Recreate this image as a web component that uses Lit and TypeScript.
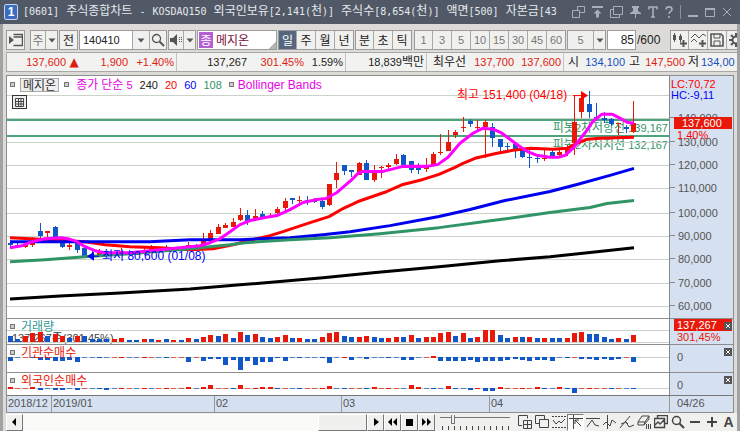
import { LitElement, html, svg, css, nothing, TemplateResult } from "lit";
import { customElement, property } from "lit/decorators.js";
import { classMap } from "lit/directives/class-map.js";

const RED = "#e8190a";
const BLUE = "#1257c8";

// Hangul runs are set at their own size beside the smaller Latin digits.
const t = (text: string) =>
  text
    .split(/([가-힣]+)/)
    .filter((p) => p)
    .map((p) => (/[가-힣]/.test(p) ? html`<span class="ko">${p}</span>` : p));

const textStyles = css`
  * { box-sizing: border-box; }
  button, input, select {
    font: inherit; color: inherit; margin: 0; padding: 0; border: 0;
    background: none; border-radius: 0; appearance: none; outline: none;
  }
  .ko { font-family: "Noto Sans CJK KR", sans-serif; font-size: 12px; line-height: 1; }
`;

/* ---------- price data: up?, high, low, body top, body bottom (chart units) ---------- */
type Candle = [number, number, number, number, number];
const candles: Candle[] = [
  [0, 240, 247, 242, 244], [0, 242, 246, 244, 246], [1, 242, 247, 243, 246], [1, 236, 246, 239, 244],
  [0, 222, 239, 230, 235], [1, 230, 238, 230, 232], [0, 225, 236, 226, 236], [0, 235, 247, 236, 246],
  [1, 242, 249, 244, 246], [0, 239, 252, 241, 249], [0, 246, 257, 247, 255], [0, 250, 258, 254, 255],
  [1, 248, 256, 252, 255], [1, 250, 254, 251, 253], [0, 251, 255, 252, 254], [1, 247, 254, 250, 253],
  [0, 249, 254, 251, 253], [0, 251, 254, 252, 254], [1, 247, 254, 249, 253], [1, 244, 250, 246, 249],
  [1, 246, 250, 247, 249], [0, 244, 250, 246, 249], [1, 246, 249, 247, 248], [1, 245, 249, 246, 248],
  [1, 241, 248, 244, 247], [1, 243, 248, 244, 246], [1, 232, 245, 239, 245], [1, 229, 239, 232, 239],
  [1, 223, 233, 226, 233], [1, 222, 227, 224, 227], [1, 217, 226, 221, 226], [1, 207, 220, 214, 219],
  [0, 209, 224, 214, 221], [1, 208, 220, 215, 219], [0, 210, 217, 213, 216], [1, 212, 216, 215, 216],
  [1, 206, 213, 208, 212], [1, 197, 212, 200, 207], [0, 197, 203, 197, 199], [1, 196, 204, 199, 200],
  [0, 196, 204, 199, 200], [0, 197, 202, 198, 201], [0, 198, 208, 200, 206], [1, 184, 205, 184, 204],
  [1, 162, 188, 173, 180], [0, 165, 175, 165, 171], [0, 170, 177, 170, 172], [1, 162, 175, 163, 175],
  [0, 160, 180, 163, 180], [1, 165, 182, 171, 180], [1, 166, 178, 167, 168], [1, 163, 170, 165, 167],
  [1, 154, 165, 159, 164], [0, 154, 165, 155, 165], [0, 161, 173, 161, 170], [0, 163, 174, 165, 170],
  [1, 158, 172, 167, 169], [1, 152, 167, 154, 165], [1, 134, 155, 152, 153], [1, 130, 151, 142, 151],
  [1, 130, 138, 132, 135], [1, 117, 132, 127, 128], [0, 119, 127, 121, 124], [1, 120, 130, 127, 128],
  [1, 120, 158, 122, 127], [0, 123, 147, 127, 138], [0, 139, 153, 139, 147], [0, 143, 151, 146, 147],
  [0, 142, 158, 144, 149], [0, 148, 158, 148, 157], [0, 150, 168, 157, 158], [0, 155, 163, 158, 159],
  [1, 150, 161, 158, 159], [0, 150, 156, 152, 156], [1, 148, 157, 152, 155], [1, 145, 156, 147, 153],
  [1, 95, 155, 122, 143], [1, 98, 118, 98, 112], [0, 91, 118, 104, 112], [0, 103, 121, 117, 119],
  [0, 112, 123, 118, 120], [0, 118, 126, 119, 124], [1, 123, 135, 123, 124], [0, 125, 133, 127, 129],
  [1, 101, 133, 123, 132],
];

// Positive: buying day (red), negative: selling day (blue).
const volume = [
  -6, -3, 6, 9, 10, -6, 8, 6, -4, 6, -6, -3, -3, -3, 3, 4, -2, -2, 3, -3, 2, -3, 2, -2, 4, -3, 5, 7, -6, 8, -4, 10,
  -7, 8, -5, -4, 5, 7, -4, 4, -3, -3, 5, 9, 10, -6, -5, 5, 6, -5, -4, 4, 5, -5, 7, -4, 5, 5, 9, 10, -6, 9, -4, 5, 12,
  12, -7, -4, 5, -5, 5, -4, 4, -4, -4, 4, 9, 10, -8, -8, -5, -3, 4, -3, 7,
];
const institution = [
  -4, -1, 1, -1, -3, -3, -4, -4, -3, -5, -1, -1, -1, -1, 1, 1, -1, -1, 1, 1, -1, -1, 1, 1, -5, 1, -4, -2, -2, -8, -3,
  -13, -4, -8, -5, -5, -1, -4, -1, -1, -1, -1, -1, -6, -1, 1, -3, -1, -2, -1, -1, -1, -1, -3, -3, -1, 1, 2, -4, -4,
  -4, -4, -3, -5, -4, -4, -4, -3, -2, -3, -4, -3, -3, -4, -1, -1, 1, -2, -2, -3, -2, -3, -2, 1, -5,
];
const foreign = [
  2, 1, 1, 2, -2, -1, -2, -2, -1, -2, 1, -1, -1, -2, -1, 1, 1, -1, 1, -1, 1, 1, 1, 1, 2, -1, 2, 4, 1, 1, -1, 4, 1, 1,
  2, 2, -1, 1, -1, -1, 1, 1, 1, 3, -1, -1, 1, 1, -1, 2, 1, 1, 1, -1, 4, 2, -1, -1, -1, 3, -1, -1, -2, 1, -3, -3, 2,
  1, 1, 1, 1, 2, -1, -1, 2, -1, -5, 1, 1, 1, 1, -1, 1, -1, -1,
];

const averages: { color: string; points: string }[] = [
  { color: "#000", points: "10,298 60,295 120,292 190,288 240,284 323,277 373,272 439,266 500,260 550,256 597,251 634,247" },
  { color: "#ff0000", points: "10,237 50,239 85,241 105,244 130,246 160,247 190,249 213,248 233,244 257,238 270,235 283,231 307,223 329,216 343,208 358,201 387,191 403,184 423,179 439,174 455,167 463,163 475,158 497,153 513,150 530,148 553,149 567,148 577,143 587,139 600,138 634,137" },
  { color: "#0000f0", points: "10,241 150,241 190,239 240,239 290,237 323,234 350,231 390,225 423,219 439,216 470,209 505,200 550,191 577,184 610,175 634,168" },
  { color: "#2f9566", points: "10,261 45,259 85,256 130,253 190,248 230,244 245,242 290,239 330,237 380,233 439,227 500,219 550,212 590,207 607,203 634,200" },
  { color: "#f0f", points: "10,247 22,245 32,241 45,238 60,237 68,238 77,241 85,246 95,250 105,252 130,252 160,249 190,246 200,245 210,242 220,238 230,231 240,224 250,220 265,217 277,215 290,209 303,202 317,199 326,198 337,192 351,180 358,173 363,171 383,171 403,166 427,166 438,164 448,157 460,143 473,133 483,128 493,129 502,133 510,139 518,145 527,151 537,155 550,157 558,157 565,155 573,148 580,139 587,130 593,121 602,114 612,114 620,118 627,122 634,123" },
];

const FIRST_X = 10;
const STEP = 7.42;
const barX = (i: number) => Math.round(FIRST_X + i * STEP);

const levels = [140, 130, 120, 110, 100, 90, 80, 70, 60].map((k) => ({
  label: `${k},000`,
  y: Math.round(305 - (k - 60) * 2.333),
}));
const TOP = 76;
const MAIN_H = 241;
const pct = (v: number, total: number) => `${((v / total) * 100).toFixed(2)}%`;

/* ---------- icons ---------- */
const icon = (w: number, h: number, body: TemplateResult) =>
  html`<svg class="icon" width=${w} height=${h} viewBox="0 0 ${w} ${h}" fill="none" stroke="currentColor" aria-hidden="true">${body}</svg>`;
const arrowDown = icon(8, 5, svg`<path d="M0.5 0.5H7.5L4 4.5Z" fill="currentColor" stroke="none"/>`);
const glass = (s: string) =>
  icon(14, 14, svg`<circle cx="5.5" cy="5.5" r="4" stroke-width=${s}/><path d="M8.5 8.5L13 13" stroke-width="2"/>`);

const titleIcons: [string, TemplateResult][] = [
  ["겹치기", icon(13, 12, svg`<path d="M5.5 4.5V.5H12.5V6.5H7.5M.5 4.5H7.5V11.5H.5Z"/>`)],
  ["맨 위로", icon(11, 12, svg`<path d="M0 1H11" stroke-width="2"/><path d="M5.5 3.5L9.5 7.5H7V11.5H4V7.5H1.5Z" fill="currentColor" stroke="none"/>`)],
  ["복제", icon(13, 12, svg`<path d="M3.5 .5H12.5V8.5H3.5ZM3.5 3.5H.5V11.5H9.5V8.5"/>`)],
  ["고정", icon(11, 12, svg`<path d="M2 0H9V2H8V5L11 7V8H6V12H5V8H0V7L3 5V2H2Z" fill="currentColor" stroke="none"/>`)],
  ["글꼴", icon(10, 12, svg`<path d="M1 3.5V1H9V3.5M5 1V11M3 11H7" stroke-width="1.6"/>`)],
  ["도움말", icon(8, 12, svg`<path d="M1 3.5C1 0 7 0 7 3.5C7 5.5 4 5.5 4 8M4 10V12" stroke-width="1.6"/>`)],
];
const windowIcons: [string, TemplateResult][] = [
  ["최소화", icon(10, 12, svg`<path d="M0 10H10" stroke-width="2"/>`)],
  ["최대화", icon(10, 12, svg`<path d="M.5 2.5H9.5V10.5H.5Z"/><path d="M0 3H10" stroke-width="2"/>`)],
  ["닫기", icon(10, 12, svg`<path d="M1 2L9 10M9 2L1 10"/>`)],
];

const chartTools: [string, TemplateResult][] = [
  ["봉 추가", icon(15, 14, svg`<path d="M2.5 0V9M8.5 1V9" /><path d="M1 2H4V7H1ZM7 3H10V7H7Z" fill="currentColor" stroke="none"/><path d="M11.5 7V14M8 10.5H15" stroke-width="2"/>`)],
  ["지표 추가", icon(15, 14, svg`<path d="M0 5L4 1L8 5L12 1L15 3M0 9L3 6L6 9"/><path d="M11.5 7V14M8 10.5H15" stroke-width="2"/>`)],
  ["저장", icon(14, 14, svg`<path d="M1 1H11L13 3V13H1Z" stroke-width="1.6"/><path d="M4 1V5H10V1M4 13V8H10V13"/>`)],
  ["설정", icon(14, 14, svg`<circle cx="7" cy="7" r="3.5" stroke-width="2"/><path d="M7 0V3M7 11V14M0 7H3M11 7H14M2 2L4 4M10 10L12 12M12 2L10 4M4 10L2 12" stroke-width="2"/>`)],
];

const drawTools: [string, TemplateResult][] = [
  ["차트 나누기", icon(14, 14, svg`<path d="M9.5 3.5V.5H.5V10.5H4M5.5 5.5H13.5V13.5H5.5ZM9.5 5.5V13.5M5.5 9.5H13.5"/>`)],
  ["차트 겹치기", icon(14, 14, svg`<path d="M.5 .5H9.5V4M.5 .5V8.5H4M4.5 4.5H13.5V12.5H4.5Z"/>`)],
  ["구간 설정", icon(14, 14, svg`<path d="M0 1.5H14M0 12.5H14" stroke-dasharray="2 1"/><path d="M1 5L4 9L7 6L9 8L13 4"/>`)],
  ["십자선", icon(14, 14, svg`<path d="M0 3.5H14M4.5 0V14"/><path d="M6 5L12 11M6 9V5H10"/>`)],
  ["추세선", icon(14, 14, svg`<path d="M0 3.5H14M1 12L6 5L9 10L13 11"/>`)],
  ["수직선", icon(14, 14, svg`<path d="M4.5 0V14M0 10L3 7L7 11L9 5L13 8"/>`)],
  ["각도선", icon(14, 14, svg`<path d="M0 13L10 1M1 9L6 7L9 12L14 10M5 6L8 9"/>`)],
  ["지우개", icon(14, 14, svg`<path d="M1 7L5 1H12L8 7ZM1 7V10H7L8 7M7 10L12 4V1"/><path d="M9.5 9V14M11.5 9V14M13.5 9V14"/>`)],
  ["그림 저장", icon(14, 14, svg`<path d="M3.5 3V.5H13.5V8.5H11M.5 3.5H10.5V12.5H.5ZM1 10L4 7L6 9L10 5" stroke-width="1.4"/>`)],
  ["돋보기", glass("1.5")],
  ["축소", icon(14, 14, svg`<path d="M2 7H12" stroke-width="2"/>`)],
  ["확대", icon(14, 14, svg`<path d="M2 7H12M7 2V12" stroke-width="2"/>`)],
];

/* ---------- window title ---------- */
@customElement("title-bar")
export class TitleBar extends LitElement {
  static styles = [
    textStyles,
    css`
      :host { display: flex; align-items: center; height: 24px; padding: 0 8px 0 4px; background: #515966; color: #e6e9ee; }
      .badge { width: 14px; height: 16px; border: 1px solid #c9d6f2; border-radius: 2px; background: #3c6cc0; color: #fff; font: bold 12px/14px "Liberation Sans", sans-serif; text-align: center; }
      .name { display: flex; gap: 7px; flex: 1; min-width: 0; margin: 0 0 0 5px; overflow: hidden; white-space: nowrap; font: 400 10px/20px "DejaVu Sans Mono", monospace; }
      .tools { display: flex; gap: 7px; align-items: center; color: #a9afb8; }
      button { display: flex; }
      .rule { width: 1px; height: 14px; background: #8b929d; }
    `,
  ];
  render() {
    const words = ["[0601]", "주식종합차트", "-", "KOSDAQ150", "외국인보유[2,141(천)]", "주식수[8,654(천)]", "액면[500]", "자본금[43"];
    const button = ([label, art]: [string, TemplateResult]) => html`<button aria-label=${label}>${art}</button>`;
    return html`<span class="badge">1</span>
      <h1 class="name">${words.map((w) => html`<span>${t(w)}</span>`)}</h1>
      <div class="tools">${titleIcons.map(button)}<span class="rule"></span>${windowIcons.map(button)}</div>`;
  }
}

/* ---------- symbol and period controls ---------- */
@customElement("chart-toolbar")
export class ChartToolbar extends LitElement {
  static styles = [
    textStyles,
    css`
      :host { display: flex; gap: 1px; height: 20px; overflow: hidden; color: #222; line-height: 18px; }
      .group { display: flex; flex: none; border: 1px solid #9c9c9c; background: #f0f0ee; }
      .group > * { display: flex; flex: none; align-items: center; justify-content: center; width: 19px; border-left: 1px solid #a8a8a8; }
      .group > :first-child { border-left: 0; width: 17px; }
      .group > .slim { width: 12px; }
      .group > .mid { width: 17px; }
      .group > button.sound { width: 14px; }
      .on { background: #56677d; color: #fff; }
      .icon { flex: none; color: #555; }
      .screen { margin-right: 4px; }
      .minutes { margin-left: 1px; color: #777; }
      .group > select.market { width: 14px; color: #777; text-align: center; }
      .group > input.code { width: 52px; padding-left: 3px; background: #fff; }
      .stock { display: flex; flex: none; align-items: center; width: 80px; gap: 3px; padding: 0 1px; border: 1px solid #9c9c9c; background: linear-gradient(135deg, transparent 50%, #b4b4b4 50%) right bottom / 7px 7px no-repeat #fff; color: #7a1040; white-space: nowrap; }
      .kind { display: flex; align-items: center; justify-content: center; width: 14px; height: 16px; background: #b45fd2; color: #fff; }
      .group > select.unit { width: 25px; color: #777; text-align: center; }
      .count { display: flex; flex: none; align-items: center; gap: 1px; font-size: 12px; }
      .count input { width: 29px; height: 20px; border: 1px solid #9c9c9c; background: #fff; text-align: right; padding-right: 1px; }
      .tools { margin-left: 9px; }
    `,
  ];
  render() {
    const button = (label: string) =>
      html`<button class=${classMap({ on: label === "일" })}>${t(label)}</button>`;
    return html`
      <div class="group screen"><button aria-label="화면">${icon(14, 14, svg`<path d="M4.5 1.5H13.5V12.5H4.5M4.5 4H13.5" stroke-width="1.5"/><path d="M0 3L5 7L0 11Z" fill="currentColor" stroke="none"/>`)}</button></div>
      <div class="group"><select class="market ko" aria-label="시장"><option>주</option></select><button class="slim" aria-label="시장 선택">${arrowDown}</button></div>
      <div class="group"><button>${t("전")}</button></div>
      <div class="group">
        <input class="code" aria-label="종목코드" value="140410" /><button class="mid" aria-label="최근 종목">${arrowDown}</button><button class="mid" aria-label="종목 찾기">${glass("1.3")}</button>
      </div>
      <div class="group"><button class="sound" aria-label="소리">${icon(12, 12, svg`<path d="M0 4H3L7 0V12L3 8H0Z" fill="currentColor" stroke="none"/><path d="M9.5 3V9M11.5 3V9" stroke-dasharray="1 1"/>`)}</button><button class="slim" aria-label="소리 설정">${arrowDown}</button></div>
      <div class="stock"><span class="kind">${t("종")}</span>${t("메지온")}</div>
      <div class="group">${["일", "주", "월", "년"].map(button)}</div>
      <div class="group">${["분", "초", "틱"].map(button)}</div>
      <div class="group minutes">${["1", "3", "5", "10", "15", "30", "45", "60"].map(button)}</div>
      <div class="group"><select class="unit" aria-label="간격"><option>5</option></select><button class="slim" aria-label="간격 선택">${arrowDown}</button></div>
      <label class="count"><input aria-label="표시 개수" value="85" />/600</label>
      <div class="group tools">${chartTools.map(([label, art]) => html`<button aria-label=${label}>${art}</button>`)}</div>`;
  }
}

/* ---------- quote line ---------- */
@customElement("quote-line")
export class QuoteLine extends LitElement {
  static styles = [
    textStyles,
    css`
      :host {
        display: grid; height: 20px; overflow: hidden; border: 1px solid #a8a8a8; border-right: 0; background: #f2f2f0; line-height: 19px; white-space: nowrap; text-align: right; color: #222;
        grid-template-columns: 59px 16px 46px 49px 70px 57px 42px 81px 39px 48px 50px 15px 46px 15px 45px 14px minmax(0, 1fr);
      }
      .up { color: #e01b10; }
      .down { color: #1450c0; }
      .tri { text-align: center; font-family: "DejaVu Sans", sans-serif; font-size: 12px; }
      .end { border-right: 1px solid #c4c4c4; padding-right: 2px; }
      .last { padding-left: 2px; text-align: left; }
    `,
  ];
  render() {
    const cells: [string, string][] = [
      ["137,600", "up"], ["▲", "up tri"], ["1,900", "up"], ["+1.40%", "up end"],
      ["137,267", ""], ["301.45%", "up"], ["1.59%", "end"], ["18,839백만", "end"],
      ["최우선", ""], ["137,700", "up"], ["137,600", "up end"],
      ["시", ""], ["134,100", "down"], ["고", ""], ["147,500", "up"], ["저", ""], ["134,00", "down last"],
    ];
    return cells.map(([text, cls]) => html`<span class=${cls}>${t(text)}</span>`);
  }
}

/* ---------- one sub-chart with bars around a base line ---------- */
@customElement("bar-pane")
export class BarPane extends LitElement {
  @property() name = "";
  @property() note = "";
  @property() tone = "red";
  @property() tag = "";
  @property() value = "";
  @property({ type: Number }) h = 26;
  @property({ type: Number }) base = 13;
  @property({ type: Boolean }) stacked = false;
  @property({ attribute: false }) data: number[] = [];
  static styles = [
    textStyles,
    css`
      :host { display: grid; grid-template-columns: minmax(0, 1fr) 64px; border-top: 1px solid #8e8e8e; }
      .plot { position: relative; background: #fff; }
      .shape { position: absolute; inset: 0; width: 100%; height: 100%; }
      .head { position: relative; display: flex; align-items: center; gap: 6px; padding-left: 3px; height: 15px; }
      .dot { width: 5px; height: 5px; border: 1px solid #777; background: #ccc; }
      .teal { color: #2f9a92; }
      .red { color: #e8190a; }
      .note { position: absolute; left: 5px; bottom: -1px; line-height: 14px; color: #444; }
      .axis { position: relative; border-left: 1px solid #888; background: #d5e0f0; color: #555; line-height: 12px; padding: 0 1px 0 4px; }
      .tag { display: block; padding-left: 3px; background: #e8190a; color: #fff; }
      .value { display: block; padding-left: 3px; }
      .zero { padding-top: 6px; }
      .close { position: absolute; right: 1px; top: 3px; width: 8px; height: 8px; display: flex; background: #555; color: #fff; }
    `,
  ];
  render() {
    return html`<div class="plot">
        ${this.note ? html`<span class="note">${t(this.note)}</span>` : nothing}
        <svg class="shape" viewBox="7 0 662 ${this.h}" preserveAspectRatio="none" shape-rendering="crispEdges">
          <rect x="7" y=${this.base} width="662" height="1" fill="#c9d3c9" />
          ${this.stacked ? svg`<rect x="7" y="11" width="662" height="1" fill="#c9d3c9"/>` : nothing}
          ${this.data.map((v, i) => {
            const size = Math.abs(v);
            const y = this.stacked ? this.base - size : v > 0 ? this.base + 1 - size : this.base;
            const faint = !this.stacked && size === 1 && i % 3 !== 0;
            return svg`<rect x=${barX(i) - 2} y=${y} width="5" height=${size} fill=${v > 0 ? RED : BLUE} fill-opacity=${faint ? 0.65 : 1}/>`;
          })}
        </svg>
        <div class="head"><i class="dot"></i><span class=${this.tone}>${t(this.name)}</span></div>
      </div>
      <div class="axis">
        ${this.tag ? html`<span class="tag">${this.tag}</span><span class="value red">${this.value}</span>` : html`<span class="value zero">${this.value}</span>`}
        <button class="close" aria-label="${this.name} 닫기">${icon(8, 8, svg`<path d="M2 2L6 6M6 2L2 6"/>`)}</button>
      </div>`;
  }
}

/* ---------- candles and moving averages ---------- */
@customElement("price-pane")
export class PricePane extends LitElement {
  static styles = [
    textStyles,
    css`
      :host { display: grid; grid-template-columns: minmax(0, 1fr) 64px; }
      .plot { position: relative; background: #fff; }
      .shape { position: absolute; inset: 0; width: 100%; height: 100%; }
      .legend { position: relative; display: flex; align-items: center; gap: 7px; padding-left: 3px; height: 17px; white-space: nowrap; }
      .dot { width: 5px; height: 5px; border: 1px solid #777; background: #ccc; }
      .stock { height: 14px; padding: 0 2px; border: 1px solid #aaa; background: #eee; color: #333; line-height: 11px; margin: 0 -2px; }
      .ma { color: #e800e8; }
      .wide { margin-left: -3px; font-size: 12px; }
      .g { color: #2f9566; }
      .b { color: #00f; }
      .r { color: #f00; }
      .grid { position: relative; display: flex; width: 15px; height: 14px; margin: 2px 0 0 5px; border: 1px solid #333; background: #eee; color: #444; align-items: center; justify-content: center; }
      .mark { position: absolute; transform: translateY(-50%); line-height: 14px; white-space: nowrap; }
      .peak { font-size: 12px; }
      .pivot { right: 1px; color: #2f9566; }
      .axis { position: relative; border-left: 1px solid #888; background: #d5e0f0; color: #555; overflow: hidden; }
      .level { left: 0; padding-left: 8px; }
      .level::before { content: ""; position: absolute; left: 0; top: 6px; width: 5px; height: 1px; background: #888; }
      .lc { line-height: 11px; padding: 3px 1px 0; }
      .now { left: 4px; right: 1px; padding-left: 8px; background: #e8190a; color: #fff; line-height: 12px; }
      .rate { left: 7px; }
    `,
  ];
  render() {
    const at = (y: number) => pct(y - TOP, MAIN_H);
    const left = (x: number) => pct(x - 7, 662);
    return html`<div class="plot">
        <span class="mark pivot" style="top:${at(128)}">${t("피봇2차저항선 139,167")}</span>
        <span class="mark pivot" style="top:${at(145)}">${t("피봇2차지지선 132,167")}</span>
        <svg class="shape" viewBox="7 ${TOP} 662 ${MAIN_H}" preserveAspectRatio="none">
          <g shape-rendering="crispEdges">
            <rect x="7" y="95" width="662" height="1" fill="#c9d3c9" />
            ${levels.map((l) => svg`<rect x="7" y=${l.y} width="662" height="1" fill="#c9d3c9"/>`)}
            <rect x="7" y="119" width="662" height="2" fill="#4da47c" />
            <rect x="7" y="135" width="662" height="2" fill="#4da47c" />
            ${candles.map(([up, hi, lo, top, bottom], i) => {
              const x = barX(i);
              const fill = up ? RED : BLUE;
              return svg`<rect x=${x} y=${hi} width="1" height=${lo - hi} fill=${fill}/><rect x=${x - 2} y=${top} width="5" height=${bottom - top} fill=${fill}/>`;
            })}
          </g>
          ${averages.map((a) => svg`<polyline points=${a.points} fill="none" stroke=${a.color} stroke-width="3" stroke-linejoin="round"/>`)}
          <path d="M573 95.5H582" stroke="#f00" />
          <path d="M581 91L588 95.5L581 100Z" fill="#f00" />
          <path d="M87 255.5L94 251V260Z" fill="#0000f0" />
          <path d="M94 255.5H99" stroke="#0000f0" />
        </svg>
        <div class="legend">
          <i class="dot"></i><span class="stock">${t("메지온")}</span><i class="dot"></i>
          <span class="ma">${t("종가 단순")} 5</span><span>240</span><span class="r">20</span><span class="b">60</span><span class="g">108</span>
          <i class="dot"></i><span class="ma wide">Bollinger Bands</span>
        </div>
        <button class="grid" aria-label="표 보기">${icon(9, 9, svg`<path d="M.5 .5H8.5V8.5H.5ZM3.5 .5V8.5M6 .5V8.5M.5 3.5H8.5M.5 6H8.5"/>`)}</button>
        <span class="mark peak r" style="left:${left(457)};top:${at(95)}">${t("최고 151,400 (04/18)")}</span>
        <span class="mark peak b" style="left:${left(102)};top:${at(255)}">${t("최저 80,600 (01/08)")}</span>
      </div>
      <div class="axis">
        <div class="lc"><div class="r">LC:70,72</div><div class="b">HC:-9,11</div></div>
        ${levels.map((l) => html`<span class="mark level" style="top:${at(l.y)}">${l.label}</span>`)}
        <span class="mark now" style="top:${at(123)}">137,600</span>
        <span class="mark rate r" style="top:${at(135)}">1,40%</span>
      </div>`;
  }
}

/* ---------- scroll bar and drawing tools ---------- */
@customElement("chart-footer")
export class ChartFooter extends LitElement {
  static styles = [
    textStyles,
    css`
      :host { display: flex; align-items: center; height: 18px; color: #444; background: #f0f0ee; }
      button { display: flex; align-items: center; justify-content: center; }
      .raised { flex: none; width: 17px; height: 17px; border: 1px solid #fff; border-right-color: #777; border-bottom-color: #777; background: #f0f0ee; color: #000; }
      .track { flex: 1; height: 17px; display: flex; justify-content: flex-end; background: #fafaf8; }
      .thumb { width: 49px; height: 17px; border: 1px solid #fff; border-right-color: #777; border-bottom-color: #777; background: #f0f0ee; }
      .zoom { flex: none; width: 70px; height: 16px; margin: 0 6px 0 5px; background: linear-gradient(#777, #777) 0 3px / 100% 1px no-repeat, repeating-linear-gradient(90deg, #444 0 1px, transparent 1px 6px) 2px 12px / 100% 4px no-repeat; }
      .zoom::-webkit-slider-thumb { appearance: none; width: 4px; height: 9px; margin-top: -6px; border: 1px solid #777; border-top: 0; background: #f0f0ee; }
      .tools { display: flex; flex: none; }
      .tools button { width: 17px; height: 17px; }
      .tools .on { border: 1px solid #777; border-right-color: #fff; border-bottom-color: #fff; background: #fafaf8; }
      .tools .letter { font: bold 14px/17px "Liberation Sans", sans-serif; }
    `,
  ];
  render() {
    const play: [string, string][] = [
      ["재생", "M4 1L9 5L4 9Z"], ["뒤로", "M5 1L1 5L5 9ZM10 1L6 5L10 9Z"], ["정지", "M2 2H9V9H2Z"], ["앞으로", "M1 1L5 5L1 9ZM6 1L10 5L6 9Z"],
    ];
    return html`<button class="raised" aria-label="왼쪽으로">${icon(11, 10, svg`<path d="M7 1L3 5L7 9Z" fill="currentColor" stroke="none"/>`)}</button>
      <div class="track"><div class="thumb"></div></div>
      ${play.map(([label, d]) => html`<button class="raised" aria-label=${label}>${icon(11, 10, svg`<path d=${d} fill="currentColor" stroke="none"/>`)}</button>`)}
      <input class="zoom" type="range" aria-label="확대 비율" min="0" max="100" value="16" />
      <div class="tools">
        ${drawTools.map(([label, art]) => html`<button class=${classMap({ on: label === "십자선" })} aria-label=${label}>${art}</button>`)}
        <button class="letter">A</button>
      </div>`;
  }
}

@customElement("app-root")
export class AppRoot extends LitElement {
  static styles = [
    textStyles,
    css`
      :host {
        display: flex; flex-direction: column; min-height: 100vh; background: #dcdbd7; color: #222;
        font-family: "Liberation Sans", "Noto Sans CJK KR", sans-serif; font-size: 11px; line-height: 16px;
      }
      .body { flex: 1; display: flex; flex-direction: column; padding: 6px 0 0 3px; border: solid #a2a2a2; border-width: 0 3px; }
      quote-line { margin-top: 2px; }
      .chart { flex: 1; display: flex; flex-direction: column; margin: 3px 3px 0 0; border: 1px solid #8e8e8e; }
      price-pane { flex: 1; }
      .volume { height: 26px; }
      .inst { height: 28px; }
      .foreign { height: 23px; }
      .dates { display: grid; grid-template-columns: minmax(0, 44fr) 163fr 127fr 148fr 180fr 64px; height: 17px; border-top: 1px solid #777; background: #d5e0f0; color: #555; line-height: 15px; }
      .dates span { padding-left: 1px; border-left: 1px solid #999; white-space: nowrap; }
      .dates span:first-child { border-left: 0; }
      .dates .last { padding-left: 7px; }
    `,
  ];
  render() {
    return html`<title-bar></title-bar>
      <div class="body">
        <chart-toolbar></chart-toolbar>
        <quote-line></quote-line>
        <div class="chart">
          <price-pane></price-pane>
          <bar-pane class="volume" name="거래량" tone="teal" note="137,267주(301.45%)" tag="137,267" value="301,45%" h="25" base="23" stacked .data=${volume}></bar-pane>
          <bar-pane class="inst" name="기관순매수" value="0" h="27" base="12" .data=${institution}></bar-pane>
          <bar-pane class="foreign" name="외국인순매수" value="0" h="22" base="15" .data=${foreign}></bar-pane>
          <div class="dates"><span>2018/12</span><span>2019/01</span><span>02</span><span>03</span><span>04</span><span class="last">04/26</span></div>
        </div>
        <chart-footer></chart-footer>
      </div>`;
  }
}
